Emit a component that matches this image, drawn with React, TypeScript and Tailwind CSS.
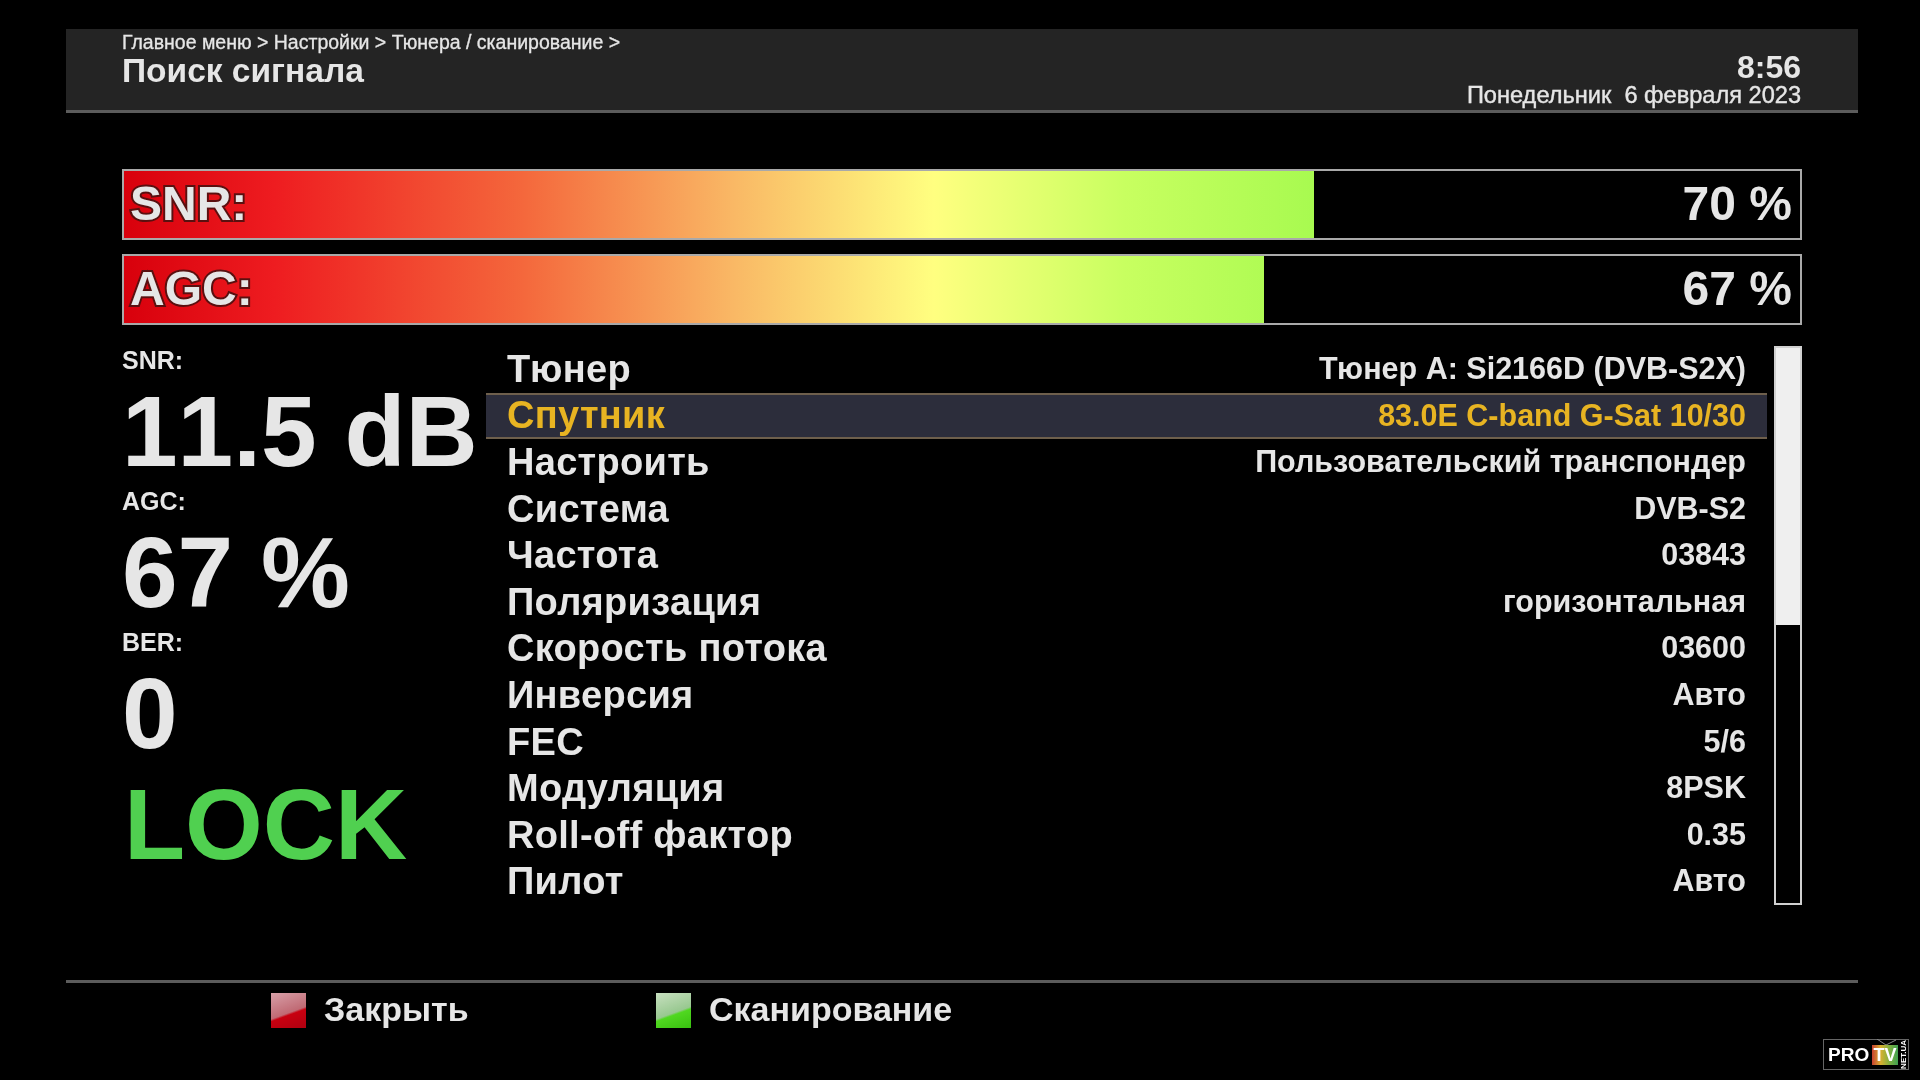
const sans = "font-['Liberation_Sans','Noto_Sans',Arial,sans-serif]";
const grad = "bg-[linear-gradient(90deg,#d8000c_0px,#ee1c20_150px,#f4683c_400px,#f9b865_610px,#ffff80_810px,#c8ff60_1000px,#a8fa50_1190px)]";

const rows: [string, string][] = [
  ["Тюнер", "Тюнер A: Si2166D (DVB-S2X)"],
  ["Спутник", "83.0E C-band G-Sat 10/30"],
  ["Настроить", "Пользовательский транспондер"],
  ["Система", "DVB-S2"],
  ["Частота", "03843"],
  ["Поляризация", "горизонтальная"],
  ["Скорость потока", "03600"],
  ["Инверсия", "Авто"],
  ["FEC", "5/6"],
  ["Модуляция", "8PSK"],
  ["Roll-off фактор", "0.35"],
  ["Пилот", "Авто"],
];

function Bar({ label, value, fillClass }: { label: string; value: string; fillClass: string }) {
  return (
    <div className="relative h-[71px] border-2 border-[#a9a9a9] bg-black">
      <div className={`h-full overflow-hidden ${fillClass} ${grad}`} />
      <span className="absolute left-[6px] top-[6px] text-[48px] leading-[54px] font-bold text-[#e6e6e6] [paint-order:stroke] [-webkit-text-stroke:4px_#5a1010]">{label}</span>
      <span className="absolute right-[8px] top-[6px] text-[48px] leading-[54px] font-bold text-[#e6e6e6]">{value}</span>
    </div>
  );
}

function Swatch({ kind }: { kind: "red" | "green" }) {
  const c = kind === "red"
    ? "bg-[linear-gradient(160deg,#d8a0a8_0%,#c06a74_55%,#c80010_60%,#b00010_100%)]"
    : "bg-[linear-gradient(160deg,#c8e0c0_0%,#98c890_55%,#50d820_60%,#38c010_100%)]";
  return <div className={`h-[35px] w-[35px] ${c}`} />;
}

function Stat({ label, value }: { label: string; value: string }) {
  return (
    <div className="h-[141px]">
      <div className="text-[25px] leading-[24px] font-bold">{label}</div>
      <div className="mt-[4px] text-[100px] leading-[110px] font-bold [font-kerning:none]">{value}</div>
    </div>
  );
}

export default function App() {
  return (
    <div className={`relative h-[1080px] w-[1920px] overflow-hidden bg-black pt-[29px] text-[#e6e6e6] blur-[0.5px] ${sans}`}>
      <header className="ml-[66px] mr-[62px] flex h-[84px] justify-between border-b-[3px] border-[#5c5c5c] bg-[#242424] pl-[56px] pr-[57px]">
        <div>
          <div className="pt-[2px] text-[19.5px] leading-[22px] [-webkit-text-stroke:0.3px_#e6e6e6]">Главное меню &gt; Настройки &gt; Тюнера / сканирование &gt;</div>
          <div className="mt-[1px] text-[33.5px] leading-[33px] font-bold">Поиск сигнала</div>
        </div>
        <div className="pt-[22px] text-right">
          <div className="text-[32px] leading-[33px] font-bold">8:56</div>
          <div className="text-[23.6px] leading-[23px] whitespace-pre [-webkit-text-stroke:0.4px_#e6e6e6]">Понедельник  6 февраля 2023</div>
        </div>
      </header>

      <section className="ml-[122px] mr-[118px] mt-[56px] flex flex-col gap-[14px]">
        <Bar label="SNR:" value="70 %" fillClass="w-[1190px]" />
        <Bar label="AGC:" value="67 %" fillClass="w-[1140px]" />
      </section>

      <main className="mt-[21px] ml-[122px] flex">
        <div className="w-[364px] shrink-0 pt-[2px]">
          <Stat label="SNR:" value="11.5 dB" />
          <Stat label="AGC:" value="67 %" />
          <Stat label="BER:" value="0" />
          <div className="mt-[-7px] pl-[2px] text-[100px] leading-[120px] font-bold text-[#50d050]">LOCK</div>
        </div>
        <div className="w-[1281px] shrink-0">
          {rows.map(([k, v], i) => (
            <div
              key={k}
              className={`flex h-[46.6px] items-center justify-between pr-[21px] pl-[21px] font-bold ${
                i === 1 ? "border-y-2 border-[#6e5f4c] bg-[#2c2d3b] text-[#e8b422]" : ""
              }`}
            >
              <span className="text-[38px] tracking-[0.3px]">{k}</span>
              <span className="mb-[1px] text-[30.5px]">{v}</span>
            </div>
          ))}
        </div>
        <div className="ml-[7px] h-[559px] w-[28px] border-2 border-[#d0d0d0] bg-black">
          <div className="h-[277px] bg-[#efefef]" />
        </div>
      </main>

      <footer className="ml-[66px] mr-[62px] mt-[75px] flex h-[57px] items-center border-t-[3px] border-[#5c5c5c] pl-[205px]">
        <div className="flex w-[385px] items-center gap-[18px]">
          <Swatch kind="red" />
          <span className="mb-[2px] text-[34px] font-bold">Закрыть</span>
        </div>
        <div className="flex items-center gap-[18px]">
          <Swatch kind="green" />
          <span className="mb-[2px] text-[34px] font-bold">Сканирование</span>
        </div>
      </footer>

      <div className="absolute top-[1039px] left-[1823px] flex h-[31px] w-[86px] items-center border border-[#666] bg-black pl-[4px]">
        <span className="text-[19px] leading-none font-bold text-white">PRO</span>
        <div className="relative ml-[3px] h-[20px] w-[28px] bg-[linear-gradient(90deg,#c84030,#d8b030,#80b040,#40a050)] text-center text-[18px] leading-[20px] font-bold text-white">
          TV
          <svg className="absolute top-[-6px] left-0 h-[6px] w-[28px]" viewBox="0 0 28 6">
            <path d="M14 6 L5 0 M14 6 L24 1" stroke="#888" strokeWidth="1" fill="none" />
          </svg>
        </div>
        <span className="ml-[2px] rotate-180 text-[8px] leading-none font-bold text-white [writing-mode:vertical-rl]">NET.UA</span>
      </div>
    </div>
  );
}
